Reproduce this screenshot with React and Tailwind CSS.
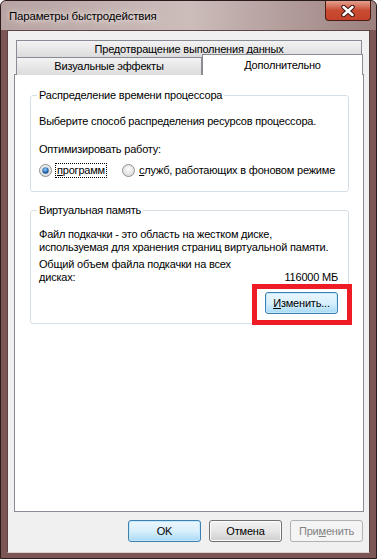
import React from 'react';

const font = { fontFamily: '"Liberation Sans", Arial, sans-serif' };

function Radio({ checked }) {
  return (
    <svg width="13" height="13" viewBox="0 0 13 13" className="shrink-0">
      <defs>
        <radialGradient id="rbg" cx="50%" cy="35%" r="70%">
          <stop offset="0%" stopColor="#ffffff" />
          <stop offset="100%" stopColor="#d4d4d4" />
        </radialGradient>
        <radialGradient id="rdot" cx="45%" cy="35%" r="70%">
          <stop offset="0%" stopColor="#9ad2ff" />
          <stop offset="60%" stopColor="#2c6fb6" />
          <stop offset="100%" stopColor="#11407a" />
        </radialGradient>
      </defs>
      <circle cx="6.5" cy="6.5" r="6" fill="url(#rbg)" stroke="#8e8f8f" />
      <circle cx="6.5" cy="6.5" r="4.5" fill="none" stroke="#e6e6e6" strokeWidth="1" />
      {checked && <circle cx="6.5" cy="6.5" r="3.2" fill="url(#rdot)" />}
    </svg>
  );
}

// group box: title sits over the top border
function GroupBox({ title, children, className }) {
  return (
    <div className={`relative border border-[#d5dfe5] rounded-[3px] ml-[15px] w-[319px] ${className || ''}`}>
      <span className="absolute left-[6px] -top-[9px] px-[2px] bg-white leading-[16px]">{title}</span>
      {children}
    </div>
  );
}

function Button({ children, variant }) {
  const styles = {
    default: 'border-[#3c7fb1] bg-gradient-to-b from-[#eaf6fd] via-[#d9f0fc] to-[#a7d9f5] shadow-[inset_0_0_0_1px_#c3e9fb]',
    normal: 'border-[#707070] bg-gradient-to-b from-[#f2f2f2] via-[#e6e6e6] to-[#cfcfcf] shadow-[inset_0_0_0_1px_#fcfcfc]',
    disabled: 'border-[#adb2b5] bg-[#f4f4f4] text-[#838383]',
  };
  return (
    <button className={`shrink-0 w-[73px] h-[22px] border rounded-[3px] leading-none ${styles[variant]}`}>
      {children}
    </button>
  );
}

export default function App() {
  return (
    <div
      style={font}
      className="w-[377px] h-[559px] text-[11px] tracking-[-0.2px] text-black bg-[#7b5655] border border-[#2b1c1c] rounded-t-[6px] flex flex-col overflow-hidden"
    >
      {/* title bar */}
      <div className="h-[29px] shrink-0 flex items-start justify-between bg-gradient-to-r from-[#b7a3a1] via-[#ccbdbb] to-[#9b807e]">
        <div className="pl-[8px] pt-[7px] text-[11.5px] leading-[16px] text-black [text-shadow:0_0_8px_#efe7e6,0_0_4px_#efe7e6]">
          Параметры быстродействия
        </div>
        <div className="mr-[5px] w-[46px] h-[20px] rounded-b-[4px] border border-[#4a1a14] border-t-0 bg-gradient-to-b from-[#e2a08f] via-[#c94a32] to-[#c6422a] flex items-center justify-center">
          <svg width="14" height="12" viewBox="0 0 14 12">
            <path d="M2.5 2 L11.5 10 M11.5 2 L2.5 10" stroke="#3a1a14" strokeWidth="4.5" strokeLinecap="round" />
            <path d="M2.5 2 L11.5 10 M11.5 2 L2.5 10" stroke="#ffffff" strokeWidth="2.5" strokeLinecap="round" />
          </svg>
        </div>
      </div>

      {/* client area */}
      <div className="mx-[6px] h-[523px] shrink-0 bg-[#f0f0f0] border border-[#5a4444] border-b-[#d9cfcf] flex flex-col">
        {/* tabs */}
        <div className="pt-[9px] pl-[6px] w-[356px]">
          <div className="ml-[2px] w-[346px] h-[17px] border border-[#898c95] border-b-0 bg-gradient-to-b from-[#f3f3f3] to-[#dcdcdc] flex items-center justify-center">
            Предотвращение выполнения данных
          </div>
          <div className="flex items-end h-[18px] relative z-10">
            <div className="ml-[2px] w-[186px] h-[18px] border border-[#898c95] border-b-0 bg-gradient-to-b from-[#f3f3f3] to-[#dcdcdc] flex items-center justify-center">
              Визуальные эффекты
            </div>
            <div className="w-[161px] h-[21px] -mt-[3px] border border-[#898c95] border-b-0 bg-white flex items-start justify-center pt-[2px]">
              Дополнительно
            </div>
          </div>
          {/* panel */}
          <div className="w-[350px] h-[438px] border border-[#898c95] bg-white pt-[20px] -mt-px">
            <GroupBox title="Распределение времени процессора" className="pt-[17px] pb-[13px]">
              <div className="pl-[8px] leading-[16px] whitespace-nowrap">Выберите способ распределения ресурсов процессора.</div>
              <div className="pl-[8px] mt-[12px] leading-[16px]">Оптимизировать работу:</div>
              <div className="pl-[8px] mt-[5px] flex items-center h-[16px] whitespace-nowrap">
                <Radio checked />
                <span className="ml-[3px] border border-dotted border-black px-px leading-[13px]">
                  <u>п</u>рограмм
                </span>
                <span className="ml-[15px]"><Radio /></span>
                <span className="ml-[4px]"><u>с</u>лужб, работающих в фоновом режиме</span>
              </div>
            </GroupBox>

            <GroupBox title="Виртуальная память" className="mt-[18px] pt-[17px] pb-[9px]">
              <div className="pl-[8px] pr-[10px] leading-[13px] whitespace-nowrap">
                Файл подкачки - это область на жестком диске,
                <br />
                используемая для хранения страниц виртуальной памяти.
              </div>
              <div className="pl-[8px] pr-[10px] mt-[4px] leading-[13px]">
                <div>Общий объем файла подкачки на всех</div>
                <div className="flex justify-between">
                  <span>дисках:</span>
                  <span>116000 МБ</span>
                </div>
              </div>
              <div className="flex justify-end pr-[10px] mt-[8px]">
                <Button variant="default">
                  <u>И</u>зменить...
                </Button>
              </div>
              {/* red annotation frame */}
              <div className="absolute right-[-4px] bottom-[-2px] w-[100px] h-[41px] border-[5px] border-[#ee1c24]" />
            </GroupBox>
          </div>
        </div>

        {/* buttons */}
        <div className="flex justify-end gap-[8px] pr-[6px] mt-[8px]">
          <Button variant="default">OK</Button>
          <Button variant="normal">Отмена</Button>
          <Button variant="disabled">
            При<u>м</u>енить
          </Button>
        </div>
      </div>
    </div>
  );
}
